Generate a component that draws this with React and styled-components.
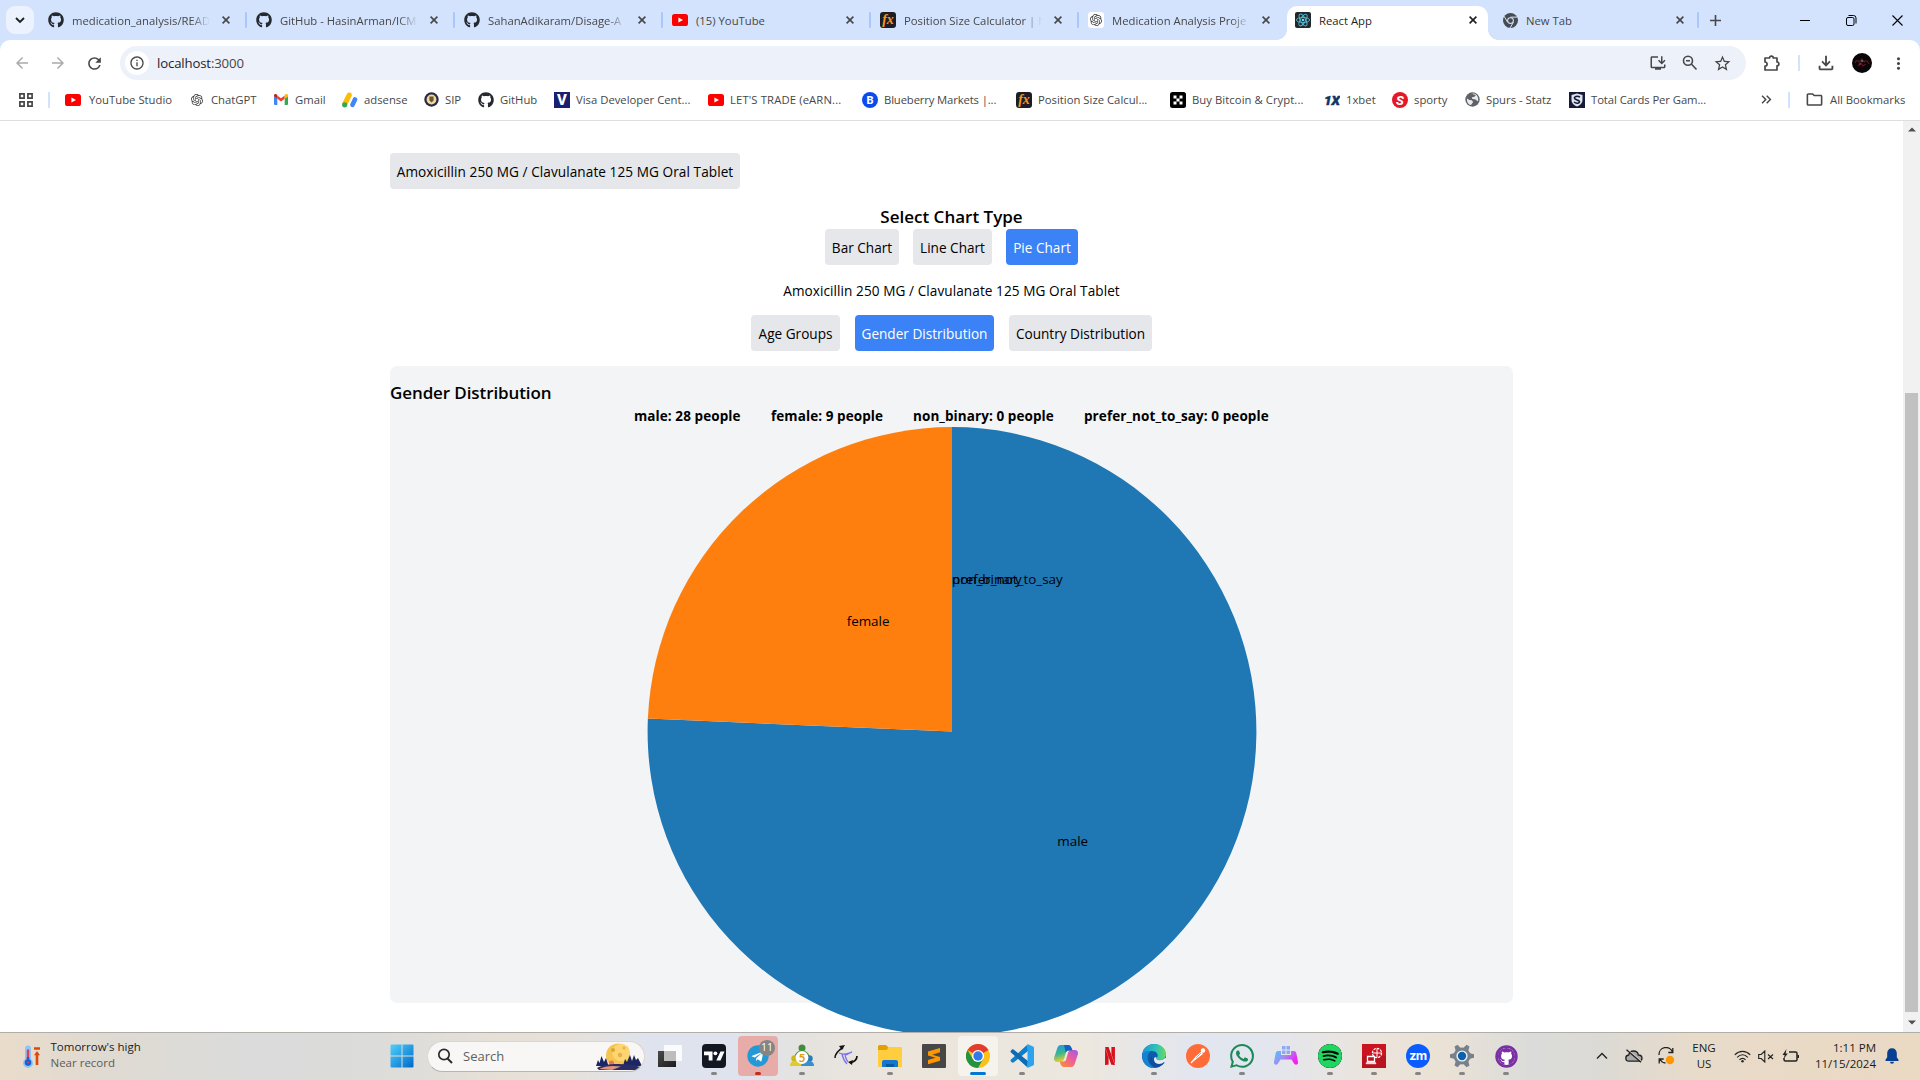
import React from "react";
import styled, { createGlobalStyle } from "styled-components";
import {
  MdArrowBack, MdArrowForward, MdRefresh, MdOutlineInfo, MdOutlineInstallDesktop, MdStarOutline,
  MdOutlineFileDownload, MdMoreVert, MdOutlineFolder, MdKeyboardDoubleArrowRight,
} from "react-icons/md";
import { FaGithub, FaTelegram } from "react-icons/fa";
import { SiNetflix, SiSpotify, SiWhatsapp, SiOpenai } from "react-icons/si";

const GlobalStyle = createGlobalStyle`
  *, *::before, *::after { box-sizing: border-box; }
  body { margin: 0; overflow: hidden; background: #fff; font-family: "Open Sans", "Noto Sans", sans-serif; }
  svg { display: block; flex: none; }
`;

const Screen = styled.div`
  width: 1920px; height: 1080px; display: flex; flex-direction: column; overflow: hidden;
`;

/* ---------- tab strip ---------- */
const TabStrip = styled.div`
  height: 40px; flex: none; display: flex; align-items: flex-end; background: #d3e3fd; padding-left: 6px;
`;
const TabSearch = styled.div`
  width: 28px; height: 28px; margin-bottom: 6px; border-radius: 9px; background: #ecf3fe;
  display: flex; align-items: center; justify-content: center;
`;
const Tab = styled.div`
  width: ${(p) => p.$w}px; height: 34px; flex: none; display: flex; align-items: center;
  padding-left: ${(p) => p.$pl}px; padding-bottom: 6px; position: relative;
  background: ${(p) => (p.$active ? "#fff" : "transparent")};
  border-radius: 10px 10px 0 0;
  color: ${(p) => (p.$active ? "#1f1f1f" : "#474747")};
  ${(p) => p.$active && `
    &::before, &::after { content: ""; position: absolute; bottom: 0; width: 10px; height: 10px; }
    &::before { left: -10px; background: radial-gradient(circle at 0 0, transparent 9.5px, #fff 10px); }
    &::after { right: -10px; background: radial-gradient(circle at 100% 0, transparent 9.5px, #fff 10px); }
  `}
`;
const Favicon = styled.div`
  width: 16px; height: 16px; flex: none; display: flex; align-items: center; justify-content: center;
`;
const TabTitle = styled.div`
  width: 138px; margin-left: 8px; font-size: 11.3px; line-height: 16px; padding-top: 1px; white-space: nowrap; overflow: hidden;
  ${(p) => p.$fade && "mask-image: linear-gradient(90deg, #000 86%, transparent 100%);"}
`;
const TabClose = styled.div`
  width: 16px; display: flex; justify-content: center; margin-left: 8px;
`;
const TabDivider = styled.div`
  width: 2px; height: 16px; margin-bottom: 12px; background: #a8c7fa; border-radius: 1px; flex: none;
`;
const NewTab = styled.div`
  width: 32px; height: 40px; display: flex; align-items: center; justify-content: center;
`;
const WindowButtons = styled.div`
  margin-left: auto; height: 40px; display: flex; align-items: center;
`;
const WindowButton = styled.div`
  width: 46px; display: flex; justify-content: center;
`;

/* ---------- toolbar ---------- */
const ToolbarBack = styled.div`
  background: #d3e3fd; flex: none;
`;
const Toolbar = styled.div`
  height: 45px; display: flex; align-items: center; background: #fff; border-radius: 10px 10px 0 0; padding: 1px 0 0 4px;
`;
const ToolButton = styled.div`
  width: ${(p) => p.$w || 36}px; flex: none; display: flex; justify-content: center; color: ${(p) => p.$c || "#474747"};
  padding-left: ${(p) => p.$pl || 0}px;
`;
const AddressBar = styled.div`
  width: 1626px; height: 34px; flex: none; margin-left: 8px; border-radius: 17px; background: #ecf1fa; display: flex; align-items: center;
  padding: 0 8px 0 5px;
`;
const SiteInfo = styled.div`
  width: 24px; height: 24px; border-radius: 50%; background: #fff; display: flex; align-items: center; justify-content: center; color: #474747;
`;
const Url = styled.div`
  margin-left: 8px; flex: 1; font-size: 13.2px; line-height: 20px; color: #1f1f1f; letter-spacing: -0.15px;
  span { color: #474747; }
`;
const ToolDivider = styled.div`
  width: 2px; height: 16px; flex: none; background: #d3e3fd;
`;
const Avatar = styled.div`
  width: 20px; height: 20px; border-radius: 50%; background: #080608; overflow: hidden;
`;

/* ---------- bookmarks ---------- */
const Bookmarks = styled.div`
  height: 36px; flex: none; display: flex; align-items: center; border-bottom: 1px solid #dcdee1; background: #fff; padding: 0 0 6px 19px;
`;
const BookmarkDivider = styled.div`
  width: 2px; height: 16px; flex: none; background: #d3e3fd; margin: 0 ${(p) => p.$after}px 0 ${(p) => p.$before}px;
`;
const Bookmark = styled.div`
  width: ${(p) => p.$w}px; flex: none; display: flex; align-items: center; gap: ${(p) => p.$gap || 6}px; white-space: nowrap;
  font-size: 11.3px; line-height: 16px; color: #474747; letter-spacing: ${(p) => p.$ls || 0}px;
`;

/* ---------- page ---------- */
const Viewport = styled.div`
  height: 911px; flex: none; display: flex; overflow: hidden; background: #fff;
`;
const Page = styled.main`
  width: 1903px; height: 911px; overflow: hidden; padding: 32px 390px 0; display: flex; flex-direction: column; align-items: center;
  color: #000; font-size: 13.6px;
`;
const Scrollbar = styled.div`
  width: 17px; background: #f1f1f1; display: flex; flex-direction: column; align-items: center; padding: 6px 0 7px;
`;
const Thumb = styled.div`
  width: 13px; height: 619px; margin: 261px 0 auto; background: #c1c1c1;
`;
const PillButton = styled.button`
  width: ${(p) => p.$w}px; height: 36px; border: 0; padding: 1px 0 0; border-radius: 4px; font: inherit; line-height: 22px; white-space: nowrap;
  background: ${(p) => (p.$active ? "#3b82f6" : "#e5e7eb")};
  color: ${(p) => (p.$active ? "#fff" : "#000")};
  letter-spacing: ${(p) => p.$ls || 0}px;
`;
const MedicationRow = styled.div`
  width: 100%; display: flex;
`;
const ChartTypeTitle = styled.h2`
  margin: 15px 0 0; height: 25px; font-size: 17px; line-height: 25px; font-weight: 600; letter-spacing: 0;
`;
const ButtonRow = styled.div`
  display: flex; gap: ${(p) => p.$gap}px;
`;
const Medication = styled.p`
  margin: 14px 0 14px; height: 22px; line-height: 23px; letter-spacing: 0.07px;
`;
const Panel = styled.section`
  width: 1123px; height: 637px; flex: none; margin-top: 15px; border-radius: 7px; background: #f3f4f6; padding-top: 14px;
`;
const PanelTitle = styled.h3`
  margin: 0; height: 25px; line-height: 25px; font-size: 17px; font-weight: 600; letter-spacing: -0.1px;
`;
const Legend = styled.div`
  display: flex; justify-content: center; gap: 29px; height: 22px; line-height: 22px; font-weight: 700; font-size: 13.5px;
`;
const LegendItem = styled.div`
  width: ${(p) => p.$w}px; white-space: nowrap; letter-spacing: 0.08px;
`;
const Chart = styled.svg`
  margin: 0 auto; overflow: visible;
  text { font-size: 13.4px; fill: #000; }
`;

/* ---------- taskbar ---------- */
const Taskbar = styled.footer`
  height: 48px; flex: none; display: flex; align-items: center; border-top: 1px solid #b1aeaa; padding-bottom: 1px;
  background: linear-gradient(90deg, #e9dccb 0, #dfdad2 110px, #dadbda 240px, #dcdcda 380px, #e6e0d7 500px, #e6e1da 570px, #dfe3ee 650px, #dfe3ee 740px,
    #e6e3df 810px, #ebe5dc 900px, #ece7df 1090px, #e2e6f0 1200px, #e3e6ef 1260px, #ebe4db 1380px, #ebe2d6 1440px, #dbdcda 1530px, #dcdad5 1600px, #e8dbc9 1700px, #ead9c3 1920px);
`;
const Weather = styled.div`
  width: 382px; padding-left: 22px; display: flex; align-items: center; gap: 9.5px;
`;
const WeatherText = styled.div`
  margin-top: -2px; font-size: 11.5px; line-height: 16px; color: #1b1b1b; letter-spacing: 0;
  div + div { color: #5d5b58; }
`;
const StartButton = styled.div`
  width: 40px; display: flex; justify-content: center;
`;
const SearchBox = styled.div`
  width: 218px; height: 31px; margin-left: 5px; border-radius: 16px; background: #f8f7f5; border: 1px solid #d9d6d1; border-bottom-color: #b9b6b2;
  display: flex; align-items: center; padding: 0 2px 0 9px; color: #5f5f5f; font-size: 13px; line-height: 18px; gap: 10px; overflow: hidden;
  svg:last-child { margin-left: auto; }
`;
const Apps = styled.div`
  display: flex; gap: 4px; margin-left: 5px;
`;
const AppButton = styled.div`
  width: 40px; height: 40px; border-radius: 4px; display: grid; place-items: center; position: relative;
  background: ${(p) => p.$bg || "transparent"};
  &::after {
    content: ""; display: ${(p) => (p.$dot ? "block" : "none")}; position: absolute; bottom: 1px; left: 50%; transform: translateX(-50%);
    width: ${(p) => (p.$wide ? 16 : 6)}px; height: 3px; border-radius: 2px; background: ${(p) => p.$dot};
  }
`;
const Badge = styled.div`
  position: absolute; right: 3px; top: 4px; width: 16px; height: 16px; border-radius: 50%; background: #858585; color: #fff;
  font-size: 10.5px; line-height: 15px; text-align: center;
`;
const Tray = styled.div`
  margin-left: auto; display: flex; align-items: center; padding-right: 12px; color: #1b1b1b; font-size: 11.5px; line-height: 16px;
`;
const TrayIcon = styled.div`
  width: ${(p) => p.$w}px; display: flex; justify-content: center;
`;
const TrayText = styled.div`
  width: ${(p) => p.$w}px; margin-top: -1px; text-align: ${(p) => p.$align}; white-space: nowrap;
`;

/* ---------- icons ---------- */
const YouTube = () => (
  <svg width="16" height="12" viewBox="0 0 16 12"><rect width="16" height="12" rx="2.6" fill="#f00" /><path d="M6.4 3.4v5.2L11 6z" fill="#fff" /></svg>
);
const Fx = () => (
  <svg width="16" height="16"><rect width="16" height="16" rx="3" fill="#1c1d26" /><text x="8" y="12" textAnchor="middle" fontFamily="Liberation Serif, serif" fontStyle="italic" fontWeight="700" fontSize="14" fill="#f7981d">fx</text></svg>
);
const Gpt = ({ boxed }) => (
  <svg width="16" height="16"><rect width="16" height="16" rx="3" fill={boxed ? "#fff" : "none"} /><g color="#3c3c3c"><SiOpenai x="2" y="2" size={12} /></g></svg>
);
const ReactLogo = () => (
  <svg width="16" height="16" viewBox="0 0 16 16"><rect width="16" height="16" rx="2" fill="#22272b" />
    <g fill="none" stroke="#53b9d3" strokeWidth=".9"><ellipse cx="8" cy="8" rx="6.6" ry="2.6" /><ellipse cx="8" cy="8" rx="6.6" ry="2.6" transform="rotate(60 8 8)" /><ellipse cx="8" cy="8" rx="6.6" ry="2.6" transform="rotate(120 8 8)" /></g><circle cx="8" cy="8" r="1.3" fill="#61dafb" /></svg>
);
const ChromeMono = () => (
  <svg width="15" height="15" viewBox="0 0 24 24"><circle cx="12" cy="12" r="12" fill="#474b4f" /><g stroke="#d3e3fd" strokeWidth="1.6" fill="none"><path d="M12 6.6h11M7.3 14.7 1.8 5.2M16.7 14.7 11.2 24" /></g><circle cx="12" cy="12" r="5.4" fill="#d3e3fd" /><circle cx="12" cy="12" r="3.8" fill="#474b4f" /></svg>
);
const Gmail = () => (
  <svg width="14" height="11" viewBox="0 0 14 11"><path d="M0 2v8a1 1 0 0 0 1 1h2.3V4.6z" fill="#4285f4" /><path d="M14 2v8a1 1 0 0 1-1 1h-2.3V4.6z" fill="#34a853" /><path d="M3.3 1.4 7 4.3l3.7-2.9v3.3L7 7.6 3.3 4.7z" fill="#ea4335" /><path d="M0 1.6C0 .2 1.6-.3 2.6.5l.7.6v3.6L0 2.2z" fill="#c5221f" /><path d="M14 1.6C14 .2 12.4-.3 11.4.5l-.7.6v3.6L14 2.2z" fill="#fbbc04" /></svg>
);
const AdSense = () => (
  <svg width="16" height="16"><path d="M7.3 3 3 11.5" stroke="#fbbc04" strokeWidth="5" strokeLinecap="round" /><path d="M13 7.5 10.5 12.8" stroke="#4285f4" strokeWidth="4.6" strokeLinecap="round" /><circle cx="2.7" cy="12.8" r="2.6" fill="#34a853" /></svg>
);
const Sip = () => (
  <svg width="15" height="15" viewBox="0 0 15 15"><circle cx="7.5" cy="7.5" r="7.2" fill="#2b2a45" /><circle cx="7.5" cy="7.5" r="4.9" fill="#eed9a0" /><path d="M5.4 4.6h4.2v3.8l-2.1 2-2.1-2z" fill="#6b5733" /></svg>
);
const Letter = ({ bg, ch, round, italic, color = "#fff", size = 12 }) => (
  <svg width="16" height="16"><rect width="16" height="16" rx={round ? 8 : 0} fill={bg} /><text x="8" y={8 + size * 0.36} textAnchor="middle" fontFamily="Roboto, sans-serif" fontWeight="800" fontStyle={italic ? "italic" : "normal"} fontSize={size} fill={color}>{ch}</text></svg>
);
const Okx = () => (
  <svg width="16" height="16"><rect width="16" height="16" rx="2.5" fill="#000" /><path d="M3.5 3.5h3v3h-3zM9.5 3.5h3v3h-3zM6.5 6.5h3v3h-3zM3.5 9.5h3v3h-3zM9.5 9.5h3v3h-3z" fill="#fff" /></svg>
);
const OneX = () => (
  <svg width="16" height="16"><text x="0" y="12.5" textLength="16" lengthAdjust="spacingAndGlyphs" fontFamily="Roboto, sans-serif" fontWeight="900" fontStyle="italic" fontSize="13.5" fill="#0f3564" stroke="#0f3564" strokeWidth=".5">1X</text></svg>
);
const Globe = () => (
  <svg width="15" height="15" viewBox="0 0 15 15"><circle cx="7.5" cy="7.5" r="7.2" fill="#5f6368" /><path d="M2 6.5 4.4 8l2.5.2 1.2 1.9L6 13C3 12.4 1.6 9.6 2 6.5zM6.5 2c1 .8 3.5.3 4.3 1.4L9 5l-2 .2v1.6l3.5.6 2.5 2C14 6 12 2 8.5 1.5z" fill="#e8eaed" /></svg>
);
const Shield = () => (
  <svg width="16" height="16"><rect width="16" height="16" fill="#161a38" /><path d="M8 1.5 13.5 3v5c0 3-2.5 5.5-5.5 6.5C5 13.5 2.5 11 2.5 8V3z" fill="#dfe3ea" /><path d="M11 5c-3-1.5-6-.5-5.500 1.300S11 8 10.500 10 6.500 11.200 5 10" fill="none" stroke="#161a38" strokeWidth="1.500" /></svg>
);
const Close = ({ c = "#474747" }) => (
  <svg width="8" height="8" viewBox="0 0 8 8"><path d="M.6.6l6.8 6.8M7.4.6.6 7.4" stroke={c} strokeWidth="1.6" /></svg>
);
const ZoomOut = () => (
  <svg width="18" height="18" viewBox="0 0 18 18" fill="none" stroke="#474747" strokeWidth="1.600"><circle cx="7" cy="6.700" r="4.500" /><path d="M10.300 10l5.200 5.500M5 6.700h4" /></svg>
);
const Puzzle = () => (
  <svg width="18" height="18" viewBox="0 0 18 18" fill="none" stroke="#474747" strokeWidth="1.700" strokeLinejoin="round"><path d="M2 4h4.500a1.900 1.900 0 0 1 3.800 0H14v4a1.900 1.900 0 0 1 0 3.800V16H2v-3.800a2.100 2.100 0 0 0 0-4.200z" /></svg>
);
const AppsGrid = () => (
  <svg width="14" height="14" viewBox="0 0 14 14" fill="none" stroke="#474747" strokeWidth="1.700"><path d="M.9.9h4.200v4.200H.9zM8.900.9h4.200v4.200H8.900zM.9 8.900h4.200v4.200H.9zM8.900 8.900h4.200v4.200H8.900z" /></svg>
);
const AvatarArt = () => (
  <svg width="20" height="20"><path d="M3 10c1-3 3-3 4-1l3-3 2 3c2-2 4-1 5 2M6 13l3-3 2 3 3-2" stroke="#5d1620" strokeWidth="1.200" fill="none" /><circle cx="10" cy="8" r="1" fill="#776" /><circle cx="8" cy="11" r="1" fill="#a81c30" /></svg>
);
const Thermo = () => (
  <svg width="19" height="23" viewBox="0 0 19 23"><path d="M3 3.500a3 3 0 0 1 6 0V14a5 5 0 1 1-6 0z" fill="#8cc6f7" /><circle cx="6" cy="17.600" r="3.300" fill="#1560d8" /><path d="M6 5.500V17" stroke="#d9415e" strokeWidth="2.400" strokeLinecap="round" /><path d="M6 12V17" stroke="#1560d8" strokeWidth="2.400" /><path d="M12 2.200h6v2.600h-6zM15 6l3 4.200h-1.700V20h-2.600v-9.800H12z" fill="#da4a0a" /></svg>
);
const WindowsLogo = () => (
  <svg width="24" height="24" viewBox="0 0 24 24"><defs><linearGradient id="win" x1="0" y1="0" x2="1" y2="1"><stop offset="0" stopColor="#4fd0fc" /><stop offset="1" stopColor="#0069c9" /></linearGradient></defs><path d="M.500 1.500a1 1 0 0 1 1-1h10v11H.500zM12.500.500h10a1 1 0 0 1 1 1v10h-11zM.500 12.500h11v11h-10a1 1 0 0 1-1-1zM12.500 12.500h11v10a1 1 0 0 1-1 1h-10z" fill="url(#win)" /></svg>
);
const Moon = () => (
  <svg width="46" height="27" viewBox="0 0 46 27"><circle cx="22" cy="12.500" r="12" fill="#f5c451" /><circle cx="25" cy="9.500" r="8.800" fill="#fdd571" /><circle cx="17" cy="7" r="2" fill="#dfa437" /><circle cx="24" cy="12" r="2.200" fill="#e6b04a" /><circle cx="28" cy="5" r="1.500" fill="#e6b04a" /><circle cx="15.500" cy="20" r="2.600" fill="#e8775a" /><path d="M0 23l2-6 1.500 3L5.500 13l2.500 6 2-4 2.500 8zM27 23l2-7 2 3 3-7 2 6 2-6 2 5 2-2 4 8z" fill="#1c2660" /><path d="M1 25c8-5 30-5 44-1v3H3z" fill="#2a2c66" /><path d="M3 26c6-3.500 14-3.500 22-2.500L16 27z" fill="#e4937b" /></svg>
);
const TaskView = () => (
  <svg width="24" height="22"><defs><linearGradient id="tv" x1="0" y1="0" x2="1" y2="1"><stop offset="0" stopColor="#4a4a4a" /><stop offset="1" stopColor="#1c1c1c" /></linearGradient></defs><rect y="6" width="18" height="16" fill="url(#tv)" /><rect x="6" width="18" height="16" fill="#fff" opacity=".85" /><rect x="6" y="6" width="12" height="10" fill="#bdbdbd" /></svg>
);
const TradingView = () => (
  <svg width="24" height="24"><rect width="24" height="24" rx="4" fill="#131722" /><path d="M2 7.500h8.500v9H6.700v-5.200H2zM18.500 7.500H22.500L18.500 16.500h-4.200z" fill="#fff" /><circle cx="13.400" cy="9.300" r="1.900" fill="#fff" /></svg>
);
const Meta5 = () => (
  <svg width="24" height="24"><circle cx="12" cy="4" r="3.500" fill="#3f8c3b" /><path d="M4.500 14C4 4 20 4 19.500 14z" fill="#4e9a45" /><circle cx="4.500" cy="14.500" r="3.200" fill="#c9b620" /><path d="M0 22c-.5-7 11-7 13 0z" fill="#e0cb2e" /><circle cx="19.500" cy="14.500" r="3.200" fill="#2a7cb5" /><path d="M11 22c1-7 13.500-7 13 0z" fill="#3790cc" /><circle cx="12" cy="13.500" r="6.400" fill="#fff" /><text x="12" y="17.800" fontFamily="Lato, sans-serif" fontWeight="700" fontSize="12" textAnchor="middle" fill="#e39a12">5</text></svg>
);
const Swirl = () => (
  <svg width="24" height="22" viewBox="0 0 24 22" fill="none"><path d="M1 13C1 8 5 5 9 2.500" stroke="#111" strokeWidth="1.500" /><path d="M5 1l6-1-3 5zM14 17l5-2-1 5z" fill="#111" /><path d="M23 11c0 4-3 6-7 7" stroke="#111" strokeWidth="1.700" /><path d="M5 8c5 2 8 1 13-1M8 9c1 5 2 7 5 10M11 9c0 4 1 5 3 8M12 10c2-1 4-2 6-3" stroke="#7b74f2" strokeWidth="1.300" /></svg>
);
const Folder = () => (
  <svg width="24" height="22"><path d="M0 1.500A1.500 1.500 0 0 1 1.500 0H8l3 3-2 3H0z" fill="#e1a106" /><path d="M0 5h8.500l2.500-3h12a1 1 0 0 1 1 1v18a1 1 0 0 1-1 1H1a1 1 0 0 1-1-1z" fill="#ffcd3d" /><path d="M4 22v-5a2 2 0 0 1 2-2h12a2 2 0 0 1 2 2v5z" fill="#1477cf" /><path d="M8 19h8v3H8z" fill="#0b599f" /></svg>
);
const Sublime = () => (
  <svg width="24" height="24"><rect width="24" height="24" rx="1" fill="#474747" /><path d="M18 4v4.200l-7.800 2.500L18 13v3.800L6 20.300v-4.200l7.700-2.400L6 11.400V7.600z" fill="#ff9800" /></svg>
);
const Chrome = () => (
  <svg width="24" height="24" viewBox="0 0 24 24"><circle cx="12" cy="12" r="12" fill="#fbc116" /><path d="M12 12 1.600 6A12 12 0 0 1 22.400 6z" fill="#e33b2e" /><path d="M1.600 6A12 12 0 0 0 12 24l5.200-9H6.800z" fill="#229342" /><circle cx="12" cy="12" r="6" fill="#fff" /><circle cx="12" cy="12" r="4.700" fill="#2f7bec" /></svg>
);
const VsCode = () => (
  <svg width="24" height="24" viewBox="0 0 24 24"><path d="M1 15.500 17.500.500 18 7 3.500 18.500c-.6.400-1.200.300-1.700-.2l-1-1c-.4-.5-.3-1.300.2-1.800z" fill="#0f7fcb" /><path d="M1 8.500 17.500 23.500 18 17 3.500 5.500c-.6-.4-1.200-.3-1.700.2l-1 1c-.4.500-.3 1.300.2 1.800z" fill="#0b6cb5" /><path d="M17.500 0 23 2.500c.6.300 1 .8 1 1.500v16c0 .7-.4 1.200-1 1.500L17.500 24z" fill="#2ba3ee" /></svg>
);
const Copilot = () => (
  <svg width="24" height="22" viewBox="0 0 24 22"><defs><linearGradient id="ca" x1="0" y1="0" x2=".3" y2="1"><stop offset="0" stopColor="#1b9ae8" /><stop offset=".55" stopColor="#3fb68b" /><stop offset="1" stopColor="#f1cf2b" /></linearGradient><linearGradient id="cb" x1="1" y1="0" x2=".2" y2="1"><stop offset="0" stopColor="#a05be8" /><stop offset=".5" stopColor="#ee5d9b" /><stop offset="1" stopColor="#f98a3e" /></linearGradient></defs><path d="M7 0h7c2 0 3 1.500 3.500 3L18.500 5.500h-4c-1.500 0-2.300 1-2.700 2.300L10 14c-.6 2-1.500 3-3.500 3H3c-2.300 0-3.500-2-2.800-4.500L3.300 3C4 1 5 0 7 0z" fill="url(#ca)" /><path d="M17 22h-7c-2 0-3-1.500-3.500-3l-.8-2.500h3.800c1.500 0 2.300-1 2.700-2.300L14 8c.6-2 1.500-3 3.500-3H21c2.300 0 3.500 2 2.800 4.500L20.700 19c-.7 2-1.700 3-3.700 3z" fill="url(#cb)" /><path d="M10 0h4c2 0 3 1.500 3.500 3l1 2.500h-4c-1.500 0-2.300 1-2.700 2.300z" fill="#1760c4" /></svg>
);
const Edge = () => (
  <svg width="24" height="24" viewBox="0 0 24 24"><defs><linearGradient id="eg" x1="0" y1=".4" x2="1" y2=".4"><stop offset="0" stopColor="#1795d8" /><stop offset=".6" stopColor="#30c4b8" /><stop offset="1" stopColor="#69dd50" /></linearGradient></defs><circle cx="12" cy="12" r="12" fill="#0d5cab" /><path d="M.2 11C1 4 6 0 12 0c7 0 12 5 12 10 0 4-3 6-6 6-3.500 0-4-1.500-3-2.500 2-3-.5-6.500-5-6.500C5 7 1 9 .2 11z" fill="url(#eg)" /><path d="M.2 11C1 8 5 6.500 9 7c-3 2-4 5-3 9s4 7 8 7.800C6 25 0 19 .2 11z" fill="#1583d3" /><path d="M14.500 13.800c-.5 1.200.5 2.500 3.500 2.500 2 0 3.500-.7 4.700-2l1.300-.3v4l-2.500 1.500c-1 .7-2.300 1-3.500 1-5 0-7-4.500-5.500-7 1.500-.5 2.200-.5 2 .3z" fill="#e8eaf0" /><path d="M10 12c-1 4 2 8 7 8 2 0 4-.8 5-2 .5.200.6.600.3 1C19 23 14 24.500 10.500 22 7 19.500 7 14 10 12z" fill="#0e4f9c" /></svg>
);
const Postman = () => (
  <svg width="24" height="24"><circle cx="12" cy="12" r="12" fill="#ff6c37" /><circle cx="17" cy="6.500" r="2.200" fill="#fff" /><path d="M15.500 7.500 17 10l-6 4.500-5 4 3.500-6z" fill="#fff" /><path d="M9 14.500 5 19" stroke="#fff" strokeWidth="1.200" /><path d="M10 14l5-5" stroke="#ff6c37" strokeWidth=".7" /></svg>
);
const Gamepad = () => (
  <svg width="24" height="20" viewBox="0 0 24 20"><defs><linearGradient id="gp" x1="0" y1="0" x2="1" y2=".5"><stop offset="0" stopColor="#48c8f8" /><stop offset=".5" stopColor="#a08df2" /><stop offset="1" stopColor="#f321f2" /></linearGradient></defs><path d="M4 5h3v4h10V5h3c1.500 0 2 1 2.400 2.500L24 16c.4 3-2.500 3.500-4 1.500l-2.500-4h-11L4 17.500C2.500 19.500-.4 19 0 16L1.600 7.500C2 6 2.500 5 4 5z" fill="url(#gp)" /><path d="M8 0h3.500v3.500H8zM12.500 0H16v3.500h-3.500zM8 4.500h3.500V8H8zM12.500 4.500H16V8h-3.500z" fill="#8fa8f4" /></svg>
);
const RedApp = () => (
  <svg width="24" height="24"><rect width="24" height="24" fill="#b9131f" /><rect width="24" height="12" fill="#cb1420" /><circle cx="15" cy="9" r="4.600" fill="none" stroke="#fff" strokeWidth="1.200" strokeDasharray="2.500 1" /><path d="M15 4.500v9M10.500 9h9" stroke="#fff" strokeWidth="1" /><path d="M5.500 12.500h7v5h-7z" fill="#b9131f" stroke="#fff" strokeWidth="1.300" /><path d="M4.500 18.500h9l.5 1.300H4z" fill="#fff" stroke="#fff" strokeWidth=".6" /></svg>
);
const ZoomApp = () => (
  <svg width="24" height="24"><circle cx="12" cy="12" r="12" fill="#0b5cff" /><text x="12" y="16" textAnchor="middle" fontFamily="Inter, sans-serif" fontWeight="700" fontSize="12.500" letterSpacing="-.6" fill="#fff">zm</text></svg>
);
const SettingsApp = () => (
  <svg width="24" height="24" viewBox="0 0 24 24"><g fill="#77818b">{[30, 90, 150].map((a) => <path key={a} d="M10.300 0h3.400l1.300 5v14l-1.300 5h-3.400L9 19V5z" transform={`rotate(${a} 12 12)`} />)}<circle cx="12" cy="12" r="8.500" /></g><circle cx="12" cy="12" r="5.600" fill="#f2f2f2" /><circle cx="12" cy="12" r="4.200" fill="#0c62ad" /></svg>
);
const GithubApp = () => (
  <svg width="23" height="23"><circle cx="11.500" cy="11.500" r="11.200" fill="#7a2fa5" /><circle cx="11.500" cy="11.500" r="8.500" fill="#fff" /><g color="#7a2fa5"><FaGithub x="2.700" y="2.700" size={17.6} /></g></svg>
);
const TelegramApp = () => (
  <svg width="22" height="22"><circle cx="11" cy="11" r="9" fill="#fff" /><g color="#2599d6"><FaTelegram size={22} /></g></svg>
);

const CloudOff = () => (
  <svg width="18" height="14" viewBox="0 0 18 14" fill="none" stroke="#222" strokeWidth="1.300"><path d="M4 12.200C1.800 12.200.8 10.600.8 9S2 6.200 3.800 6C4.200 3.600 6 2 8.500 2S13 3.500 13.300 6c2.300 0 3.700 1.300 3.700 3.200 0 1.700-1.200 3-3.200 3z" fill="#aaa" /><path d="M2.500.6 17 13" stroke="#e3dace" strokeWidth="1.200" /><path d="M1.500.8 16 13.300" /></svg>
);
const Sync = () => (
  <svg width="18" height="18" viewBox="0 0 18 18" fill="none" stroke="#222" strokeWidth="1.300"><path d="M2 8A7 7 0 0 1 15.500 5M15.800 1v4.500h-4.500M2.200 16.500V12h4.500M3 12.500c1.200 2 3 3.300 5.500 3.500" /><circle cx="13" cy="13" r="4.200" fill="#ff9500" stroke="none" /></svg>
);
const Wifi = () => (
  <svg width="17" height="13" viewBox="0 0 17 13" fill="none" stroke="#222" strokeWidth="1.200"><path d="M.8 4.800c4.500-4.500 11-4.500 15.400 0M3.200 7.300c3.200-3.200 7.400-3.200 10.600 0M5.500 9.700c2-1.900 4-1.900 6 0" /><circle cx="8.500" cy="11.300" r="1.200" fill="#222" stroke="none" /></svg>
);
const Muted = () => (
  <svg width="16" height="13" viewBox="0 0 16 13" fill="none" stroke="#222" strokeWidth="1.100"><path d="M.7 4.500h2.500L6.800 1v11L3.200 8.500H.7zM10 4.500l5 4.500M15 4.500 10 9" /></svg>
);
const Battery = () => (
  <svg width="17" height="14" viewBox="0 0 17 14"><path d="M7 3h6.500a1.500 1.500 0 0 1 1.500 1.500v6a1.500 1.500 0 0 1-1.500 1.500h-10A1.500 1.500 0 0 1 2 10.500V9" fill="none" stroke="#222" strokeWidth="1.500" /><path d="M4.500 0 .5 6h2.200L1.500 10 5.800 4.500H3.600zM15.500 6H17v3h-1.500z" fill="#222" /></svg>
);
const Bell = () => (
  <svg width="14" height="16" viewBox="0 0 14 16"><path d="M7 .3c3 0 4.800 2 4.800 5v4l1.700 2.400V13H.5v-1.300L2.200 9.300v-4c0-3 1.800-5 4.800-5zM5 13.800h4a2 2 0 0 1-4 0z" fill="#083f93" /></svg>
);

/* ---------- data ---------- */
const tabs = [
  { icon: <FaGithub size={16} color="#24292f" />, title: "medication_analysis/READ", fade: true },
  { icon: <FaGithub size={16} color="#24292f" />, title: "GitHub - HasinArman/ICM", fade: true },
  { icon: <FaGithub size={16} color="#24292f" />, title: "SahanAdikaram/Disage-A", fade: true },
  { icon: <YouTube />, title: "(15) YouTube" },
  { icon: <Fx />, title: "Position Size Calculator | M", fade: true },
  { icon: <Gpt boxed />, title: "Medication Analysis Proje", fade: true, last: true },
];

const bookmarks = [
  { icon: <YouTube />, label: "YouTube Studio", w: 124, gap: 8 },
  { icon: <Gpt />, label: "ChatGPT", w: 84 },
  { icon: <Gmail />, label: "Gmail", w: 69 },
  { icon: <AdSense />, label: "adsense", w: 81 },
  { icon: <Sip />, label: "SIP", w: 55 },
  { icon: <FaGithub size={16} color="#24292f" />, label: "GitHub", w: 76 },
  { icon: <Letter bg="#1a1f71" ch="V" size={15} />, label: "Visa Developer Cent...", w: 154 },
  { icon: <YouTube />, label: "LET'S TRADE (eARN...", w: 154, ls: 0.12 },
  { icon: <Letter bg="#0a4bf0" ch="B" round size={11} />, label: "Blueberry Markets |...", w: 154, ls: -0.14 },
  { icon: <Fx />, label: "Position Size Calcul...", w: 154 },
  { icon: <Okx />, label: "Buy Bitcoin & Crypt...", w: 154, ls: 0.05 },
  { icon: <OneX />, label: "1xbet", w: 68 },
  { icon: <Letter bg="#e41827" ch="S" round italic size={13} />, label: "sporty", w: 72 },
  { icon: <Globe />, label: "Spurs - Statz", w: 105 },
  { icon: <Shield />, label: "Total Cards Per Gam...", w: 188, ls: -0.08 },
];

const genders = [
  { label: "male", count: 28, color: "#1f77b4", w: 108 },
  { label: "female", count: 9, color: "#ff7f0e", w: 113 },
  { label: "non_binary", count: 0, color: "#2ca02c", w: 142 },
  { label: "prefer_not_to_say", count: 0, color: "#d62728", w: 185 },
];

const RADIUS = 304.4;
const total = genders.reduce((sum, g) => sum + g.count, 0);
const at = (angle, r) => [r * Math.sin(angle), -r * Math.cos(angle)];
let cursor = 0;
const slices = genders.map((g) => {
  const start = cursor;
  const end = start + (g.count / total) * Math.PI * 2;
  cursor = end;
  const [x0, y0] = at(start, RADIUS);
  const [x1, y1] = at(end, RADIUS);
  const [lx, ly] = at((start + end) / 2, RADIUS / 2);
  const large = end - start > Math.PI ? 1 : 0;
  return { ...g, lx, ly, d: `M0 0L${x0} ${y0}A${RADIUS} ${RADIUS} 0 ${large} 1 ${x1} ${y1}Z` };
});

const GRAY = "#858585";
const apps = [
  { icon: <TaskView /> },
  { icon: <TradingView />, dot: GRAY },
  { icon: <TelegramApp />, dot: "#c42b1c", bg: "#e8aca8", badge: "11" },
  { icon: <Meta5 />, dot: GRAY },
  { icon: <Swirl /> },
  { icon: <Folder />, dot: GRAY },
  { icon: <Sublime /> },
  { icon: <Chrome />, dot: "#0078d4", wide: true, bg: "#f6f3ef" },
  { icon: <VsCode />, dot: GRAY },
  { icon: <Copilot /> },
  { icon: <SiNetflix size={18} color="#d8101c" /> },
  { icon: <Edge />, dot: GRAY },
  { icon: <Postman /> },
  { icon: <SiWhatsapp size={24} color="#1c8a57" />, dot: GRAY },
  { icon: <Gamepad /> },
  { icon: <SiSpotify size={24} color="#1ed760" style={{ background: "#000", borderRadius: "50%" }} />, dot: GRAY },
  { icon: <RedApp />, dot: GRAY },
  { icon: <ZoomApp />, dot: GRAY },
  { icon: <SettingsApp />, dot: GRAY },
  { icon: <GithubApp />, dot: GRAY },
];

export default function App() {
  return (
    <Screen>
      <GlobalStyle />
      <TabStrip>
        <TabSearch>
          <svg width="10" height="7" viewBox="0 0 10 7"><path d="M1 1l4 4 4-4" fill="none" stroke="#1f1f1f" strokeWidth="1.8" /></svg>
        </TabSearch>
        {tabs.map((t, i) => (
          <React.Fragment key={t.title}>
            <Tab $w={i === 0 ? 211 : t.last ? 208 : 206} $pl={i === 0 ? 14 : 9}>
              <Favicon>{t.icon}</Favicon>
              <TabTitle $fade={t.fade}>{t.title}</TabTitle>
              <TabClose><Close /></TabClose>
            </Tab>
            {!t.last && <TabDivider />}
          </React.Fragment>
        ))}
        <Tab $w={201} $pl={8} $active>
          <Favicon><ReactLogo /></Favicon>
          <TabTitle>React App</TabTitle>
          <TabClose><Close c="#1f1f1f" /></TabClose>
        </Tab>
        <Tab $w={209} $pl={14}>
          <Favicon><ChromeMono /></Favicon>
          <TabTitle>New Tab</TabTitle>
          <TabClose><Close /></TabClose>
        </Tab>
        <TabDivider />
        <NewTab>
          <svg width="11" height="11"><path d="M5.500 0v11M0 5.500h11" stroke="#474747" strokeWidth="1.600" /></svg>
        </NewTab>
        <WindowButtons>
          <WindowButton><svg width="10" height="10"><path d="M0 5.500h10" stroke="#000" /></svg></WindowButton>
          <WindowButton><svg width="11" height="11" fill="none" stroke="#000"><rect x=".5" y="2.500" width="7.500" height="8" rx="1.500" /><path d="M2.500.500h5a2.500 2.500 0 0 1 2.500 2.500v5.500" /></svg></WindowButton>
          <WindowButton><svg width="11" height="11"><path d="M.5.5l10 10M10.500.5l-10 10" stroke="#000" strokeWidth="1.100" /></svg></WindowButton>
        </WindowButtons>
      </TabStrip>

      <ToolbarBack>
        <Toolbar>
          <ToolButton $c="#a9abad"><MdArrowBack size={18} /></ToolButton>
          <ToolButton $c="#a9abad"><MdArrowForward size={18} /></ToolButton>
          <ToolButton><MdRefresh size={19} /></ToolButton>
          <AddressBar>
            <SiteInfo><MdOutlineInfo size={16} /></SiteInfo>
            <Url>localhost<span>:3000</span></Url>
            <ToolButton $w={32}><MdOutlineInstallDesktop size={18} /></ToolButton>
            <ToolButton $w={32}><ZoomOut /></ToolButton>
            <ToolButton $w={32}><MdStarOutline size={19} /></ToolButton>
          </AddressBar>
          <ToolButton $w={52}><Puzzle /></ToolButton>
          <ToolDivider />
          <ToolButton $w={52}><MdOutlineFileDownload size={22} /></ToolButton>
          <ToolButton $w={20}><Avatar><AvatarArt /></Avatar></ToolButton>
          <ToolButton $w={48} $pl={4}><MdMoreVert size={19} /></ToolButton>
        </Toolbar>
      </ToolbarBack>

      <Bookmarks>
        <AppsGrid />
        <BookmarkDivider $before={15} $after={15} />
        {bookmarks.map((b) => (
          <Bookmark key={b.label} $w={b.w} $gap={b.gap} $ls={b.ls}><Favicon>{b.icon}</Favicon>{b.label}</Bookmark>
        ))}
        <ToolButton $w={18}><MdKeyboardDoubleArrowRight size={17} /></ToolButton>
        <BookmarkDivider $before={13} $after={16} />
        <Bookmark $w={110} $gap={8}><Favicon><MdOutlineFolder size={19} color="#474747" /></Favicon>All Bookmarks</Bookmark>
      </Bookmarks>

      <Viewport>
        <Page>
          <MedicationRow><PillButton $w={350} $ls={0.07}>Amoxicillin 250 MG / Clavulanate 125 MG Oral Tablet</PillButton></MedicationRow>
          <ChartTypeTitle>Select Chart Type</ChartTypeTitle>
          <ButtonRow $gap={14}>
            <PillButton $w={74}>Bar Chart</PillButton>
            <PillButton $w={79}>Line Chart</PillButton>
            <PillButton $w={72} $active>Pie Chart</PillButton>
          </ButtonRow>
          <Medication>Amoxicillin 250 MG / Clavulanate 125 MG Oral Tablet</Medication>
          <ButtonRow $gap={15}>
            <PillButton $w={89}>Age Groups</PillButton>
            <PillButton $w={139} $active>Gender Distribution</PillButton>
            <PillButton $w={143}>Country Distribution</PillButton>
          </ButtonRow>
          <Panel>
            <PanelTitle>Gender Distribution</PanelTitle>
            <Legend>
              {genders.map((g) => <LegendItem key={g.label} $w={g.w}>{`${g.label}: ${g.count} people`}</LegendItem>)}
            </Legend>
            <Chart width="610" height="609" viewBox="-305 -304.5 610 609">
              {slices.filter((s) => s.count > 0).map((s) => <path key={s.label} d={s.d} fill={s.color} />)}
              {slices.map((s) => <text key={s.label} x={s.lx} y={s.ly} dy=".35em">{s.label}</text>)}
            </Chart>
          </Panel>
        </Page>
        <Scrollbar>
          <svg width="8" height="5"><path d="M0 4.500 4 .5l4 4z" fill="#505050" /></svg>
          <Thumb />
          <svg width="8" height="5"><path d="M0 .5 4 4.500l4-4z" fill="#505050" /></svg>
        </Scrollbar>
      </Viewport>

      <Taskbar>
        <Weather>
          <Thermo />
          <WeatherText><div>Tomorrow's high</div><div>Near record</div></WeatherText>
        </Weather>
        <StartButton><WindowsLogo /></StartButton>
        <SearchBox>
          <svg width="16" height="16" viewBox="0 0 16 16"><circle cx="7" cy="6.500" r="5.200" fill="none" stroke="#2b2b2b" strokeWidth="1.700" /><path d="M10.500 10.500 15 15" stroke="#2b2b2b" strokeWidth="1.900" /></svg>
          Search
          <Moon />
        </SearchBox>
        <Apps>
          {apps.map((a, i) => (
            <AppButton key={i} $bg={a.bg} $dot={a.dot} $wide={a.wide}>{a.icon}{a.badge && <Badge>{a.badge}</Badge>}</AppButton>
          ))}
        </Apps>
        <Tray>
          <TrayIcon $w={32}><svg width="12" height="8"><path d="M1 6.500l5-5 5 5" fill="none" stroke="#222" strokeWidth="1.400" /></svg></TrayIcon>
          <TrayIcon $w={32}><CloudOff /></TrayIcon>
          <TrayIcon $w={32}><Sync /></TrayIcon>
          <TrayText $w={44} $align="center">ENG<br />US</TrayText>
          <TrayIcon $w={32}><Wifi /></TrayIcon>
          <TrayIcon $w={16}><Muted /></TrayIcon>
          <TrayIcon $w={32}><Battery /></TrayIcon>
          <TrayText $w={70} $align="right">1:11 PM<br />11/15/2024</TrayText>
          <TrayIcon $w={32}><Bell /></TrayIcon>
        </Tray>
      </Taskbar>
    </Screen>
  );
}
